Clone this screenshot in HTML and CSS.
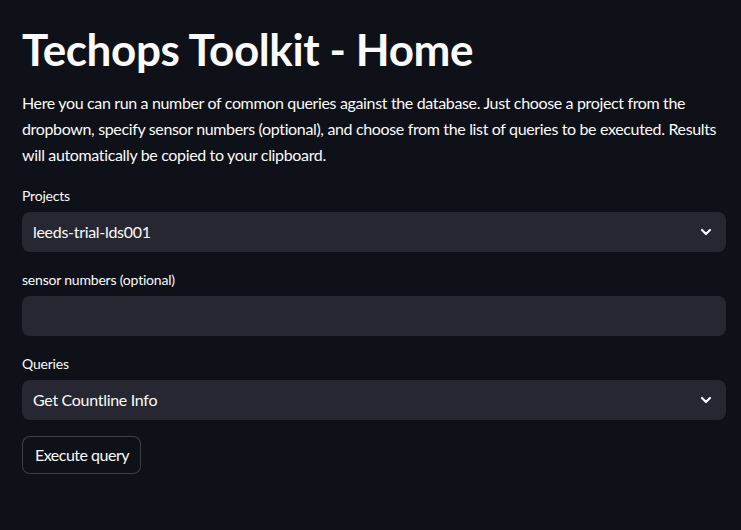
FILE: index.html
```html
<!DOCTYPE html>
<html>
<head>
<meta charset="utf-8">
<link rel="stylesheet" href="styles.css">
</head>
<body>
<main class="page">
  <h1 class="title">Techops Toolkit - Home</h1>
  <p class="intro">Here you can run a number of common queries against the database. Just choose a project from the dropbown, specify sensor numbers (optional), and choose from the list of queries to be executed. Results will automatically be copied to your clipboard.</p>
  <div class="field">
    <label class="label">Projects</label>
    <div class="select">
      <span class="value">leeds-trial-lds001</span>
      <svg class="chev" width="12" height="12" viewBox="0 0 12 12"><path d="M2 4 L6 8 L10 4" fill="none" stroke="#fafafa" stroke-width="2.2" stroke-linecap="round" stroke-linejoin="round"/></svg>
    </div>
  </div>
  <div class="field">
    <label class="label">sensor numbers (optional)</label>
    <div class="input"></div>
  </div>
  <div class="field">
    <label class="label">Queries</label>
    <div class="select">
      <span class="value">Get Countline Info</span>
      <svg class="chev" width="12" height="12" viewBox="0 0 12 12"><path d="M2 4 L6 8 L10 4" fill="none" stroke="#fafafa" stroke-width="2.2" stroke-linecap="round" stroke-linejoin="round"/></svg>
    </div>
  </div>
  <div class="actions">
    <button class="btn">Execute query</button>
  </div>
</main>
</body>
</html>
```
FILE: styles.css
```css
html, body {
  margin: 0;
  padding: 0;
  background: #0e1117;
  color: #fafafa;
  font-family: Lato, "Noto Sans", sans-serif;
}
.page {
  display: flex;
  flex-direction: column;
  gap: 16px;
  padding: 23px 15px 0 22px;
  width: 704px;
}
.title {
  margin: 0 0 -1px 0;
  font-size: 44px;
  font-weight: 700;
  line-height: 52px;
  letter-spacing: -0.4px;
}
.intro {
  margin: 0;
  font-size: 16px;
  line-height: 26px;
  letter-spacing: -0.35px;
}
.field {
  display: flex;
  flex-direction: column;
}
.label {
  font-size: 14px;
  line-height: 24px;
  height: 24px;
  margin-bottom: 4px;
  letter-spacing: -0.2px;
}
.select, .input {
  height: 40px;
  background: #262730;
  border-radius: 8px;
  box-sizing: border-box;
}
.select {
  display: flex;
  align-items: center;
  justify-content: space-between;
  padding: 0 14px 0 11px;
}
.value {
  font-size: 16px;
  letter-spacing: -0.3px;
  line-height: 20px;
  margin-top: -1px;
}
.chev { display: block; }
.actions { display: flex; }
.btn {
  height: 38px;
  padding: 0 11px 0 12px;
  border: 1px solid rgba(250,250,250,0.2);
  border-radius: 8px;
  background: #0e1117;
  color: #fafafa;
  font-family: inherit;
  font-size: 16px;
  letter-spacing: -0.5px;
  line-height: 20px;
}
```
